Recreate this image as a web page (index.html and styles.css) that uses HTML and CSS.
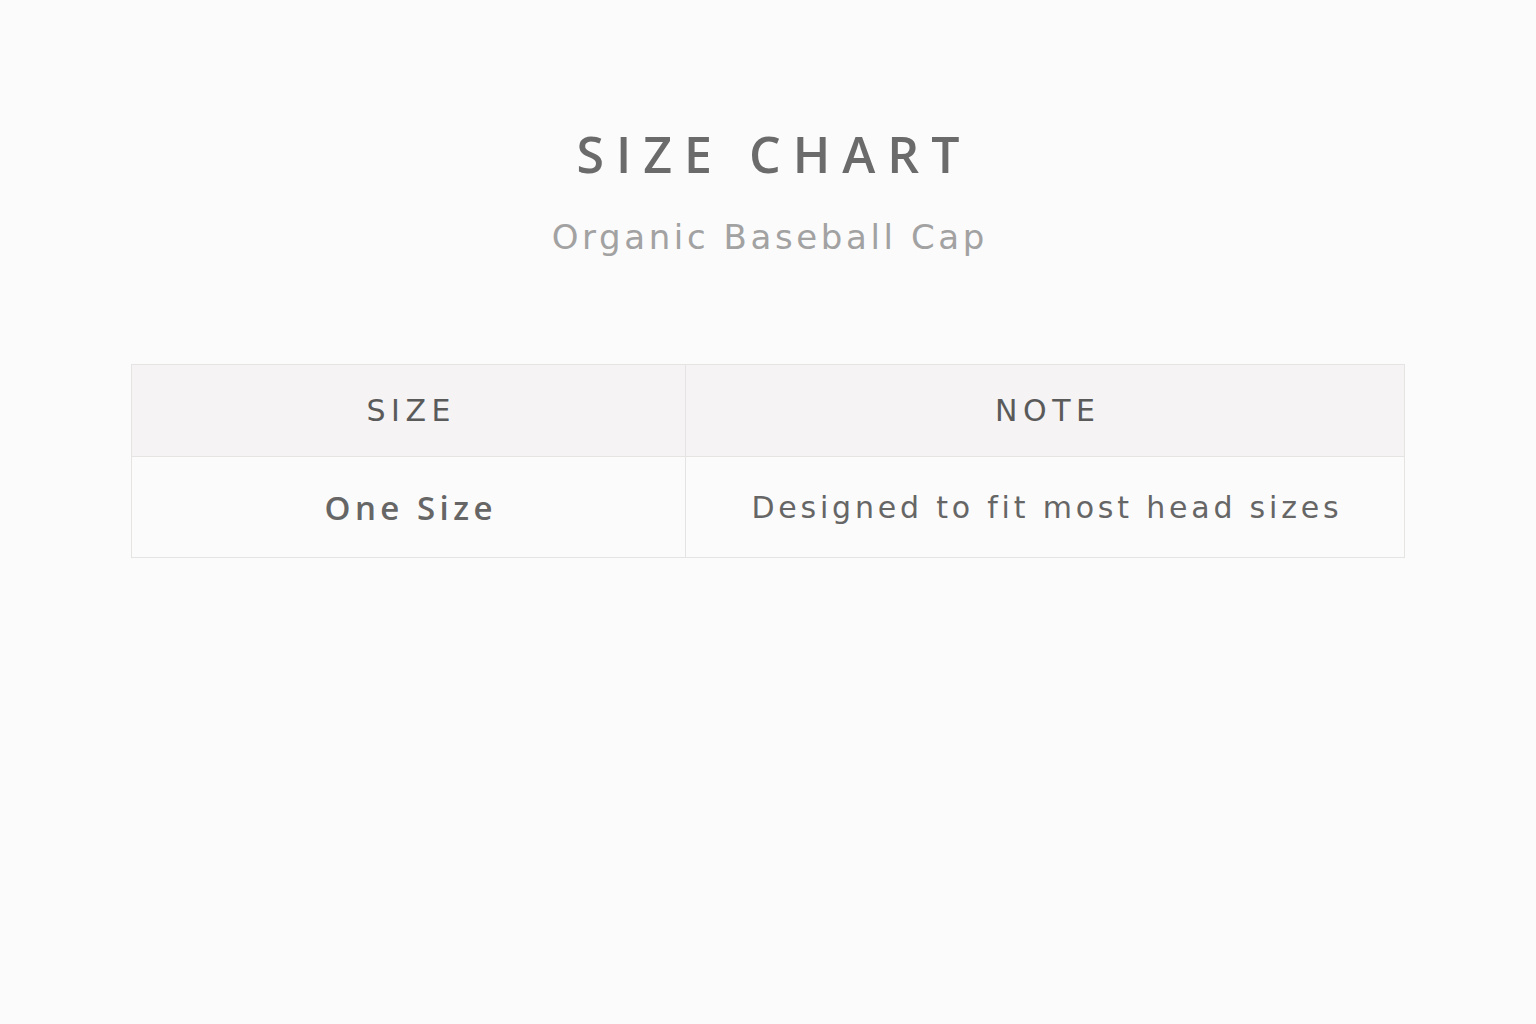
FILE: index.html
```html
<!DOCTYPE html>
<html lang="en">
<head>
<meta charset="utf-8">
<title>Size Chart</title>
<link rel="stylesheet" href="styles.css">
</head>
<body>
<main class="page">
  <header class="heading">
    <h1 class="title">SIZE CHART</h1>
    <p class="subtitle">Organic Baseball Cap</p>
  </header>
  <table class="chart">
    <thead>
      <tr>
        <th class="col-size">SIZE</th>
        <th class="col-note">NOTE</th>
      </tr>
    </thead>
    <tbody>
      <tr>
        <td class="cell-size">One Size</td>
        <td class="cell-note">Designed to fit most head sizes</td>
      </tr>
    </tbody>
  </table>
</main>
</body>
</html>
```
FILE: styles.css
```css
html, body {
  margin: 0;
  padding: 0;
  background: #fcfbfb;
}
body {
  font-family: "DejaVu Sans", "Open Sans", sans-serif;
  color: #666;
}
.page {
  padding: 124px 131px 0 131px;
  display: flex;
  flex-direction: column;
  align-items: center;
}
.heading {
  text-align: center;
}
.title {
  margin: 0;
  font-family: "Open Sans", "DejaVu Sans", sans-serif;
  font-size: 50px;
  font-weight: 600;
  letter-spacing: 12px;
  text-indent: 12px;
  color: #6b6b6b;
  line-height: 60px;
}
.subtitle {
  margin: 31px 0 0 0;
  font-size: 34px;
  font-weight: 400;
  letter-spacing: 3.6px;
  text-indent: 3.6px;
  color: #a2a2a2;
  line-height: 44px;
}
.chart {
  margin-top: 105px;
  width: 100%;
  border-collapse: collapse;
  table-layout: fixed;
  border: 1px solid #e6e3e3;
}
.col-size { width: 553px; }
.chart th {
  background: #f5f3f3;
  height: 91px;
  font-size: 30px;
  font-weight: 400;
  letter-spacing: 5.5px;
  text-indent: 5.5px;
  color: #5a5a5a;
  border: 1px solid #e6e3e3;
  padding: 0;
}
.chart td {
  height: 100px;
  text-align: center;
  border: 1px solid #e6e3e3;
  padding: 0;
  color: #666;
}
.cell-size {
  font-family: "Open Sans", "DejaVu Sans", sans-serif;
  font-size: 33px;
  font-weight: 600;
  letter-spacing: 4.5px;
  text-indent: 4.5px;
}
.cell-note {
  font-size: 30px;
  font-weight: 400;
  letter-spacing: 3.8px;
  text-indent: 3.8px;
}
```
